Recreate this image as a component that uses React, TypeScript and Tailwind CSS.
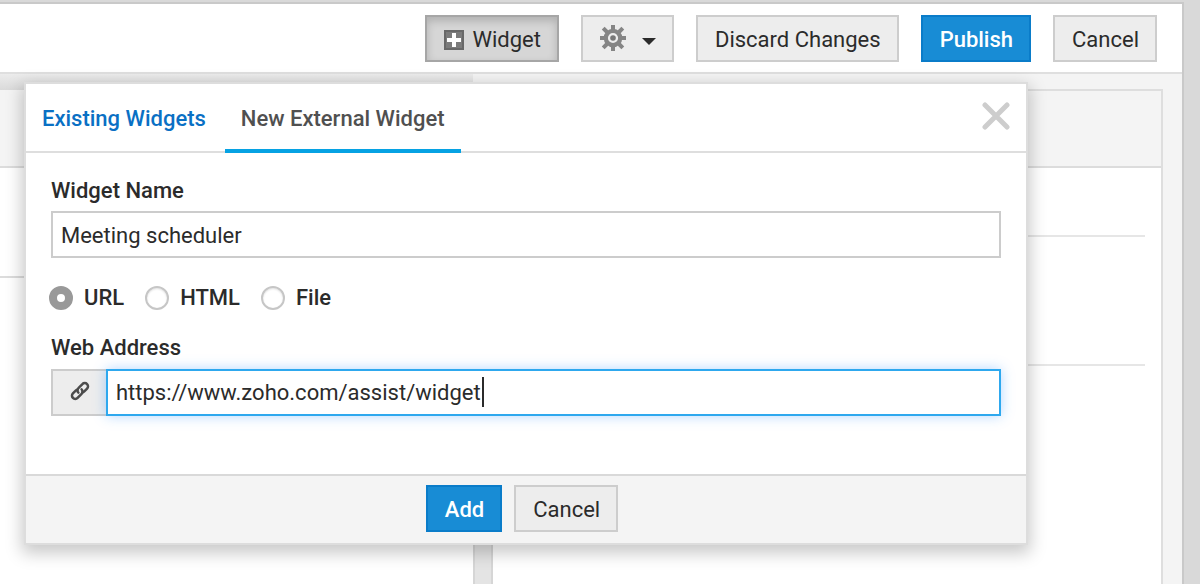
import React, { useState } from "react";
import type { ButtonHTMLAttributes } from "react";

const kinds = {
  plain: "border-[#cdcdcd] bg-[#ededed] text-[#2b2b2b]",
  primary: "border-[#0a7cc9] bg-[#188cd5] font-medium text-white",
  pressed:
    "border-[#a6a6a6] bg-[#d6d6d6] text-[#2b2b2b] shadow-[inset_0_4px_8px_rgba(0,0,0,0.18)]",
};

type ButtonProps = ButtonHTMLAttributes<HTMLButtonElement> & {
  kind?: keyof typeof kinds;
};

function Button({ kind = "plain", children, ...rest }: ButtonProps) {
  return (
    <button
      type="button"
      className={`flex h-[47px] shrink-0 items-center justify-center border-2 pt-0.5 pr-4 pl-[17px] whitespace-nowrap ${kinds[kind]}`}
      {...rest}
    >
      {children}
    </button>
  );
}

function PlusBox() {
  return (
    <svg width="20" height="20" viewBox="0 0 20 20" className="mr-2" aria-hidden="true">
      <rect x="1" y="1" width="18" height="18" fill="#7b7b7b" stroke="#686868" strokeWidth="2" />
      <path d="M10 3v14M3 10h14" stroke="#fff" strokeWidth="4" />
    </svg>
  );
}

function Gear() {
  return (
    <svg width="26" height="26" viewBox="-13 -13 26 26" className="mb-1" aria-hidden="true">
      <g stroke="#858585" strokeWidth="4">
        <path d="M0-13V-8M0 13V8M-13 0H-8M13 0H8" />
        <path d="M-9.8-9.8-6-6M9.8 9.8 6 6M9.8-9.8 6-6M-9.8 9.8-6 6" />
      </g>
      <circle r="7.2" fill="#ededed" stroke="#858585" strokeWidth="4.2" />
      <circle r="2.8" fill="#777" />
    </svg>
  );
}

function LinkIcon() {
  return (
    <svg
      width="20"
      height="20"
      viewBox="0 0 20 20"
      fill="none"
      stroke="#4c4c4c"
      strokeWidth="2.5"
      strokeLinecap="round"
      aria-hidden="true"
    >
      <path d="M8.4 11.6a3 3 0 0 1 0-4.4l4-4.1a3.2 3.2 0 0 1 4.7 0 3.2 3.2 0 0 1 0 4.5l-2.8 2.8a3.2 3.2 0 0 1-2 .9" />
      <path d="M11.6 8.4a3 3 0 0 1 0 4.4l-4 4.1a3.2 3.2 0 0 1-4.7 0 3.2 3.2 0 0 1 0-4.5l2.8-2.8a3.2 3.2 0 0 1 2-.9" />
    </svg>
  );
}

function Toolbar() {
  return (
    <header className="flex h-[70px] items-center justify-end gap-[22px] border-b-2 border-[#dfdfdf] bg-white pt-px pr-[25px]">
      <Button kind="pressed">
        <PlusBox />
        Widget
      </Button>
      <Button aria-label="Settings">
        <Gear />
        <svg width="14" height="8" viewBox="0 0 14 8" className="mt-1 ml-4" aria-hidden="true">
          <path d="M0 0h14L7 7z" fill="#2b2b2b" />
        </svg>
      </Button>
      <Button>Discard Changes</Button>
      <Button kind="primary">Publish</Button>
      <Button>Cancel</Button>
    </header>
  );
}

function Canvas() {
  return (
    <div className="flex grow bg-[#f4f4f4]">
      <div className="flex w-[473px] shrink-0 flex-col">
        <div className="h-4 bg-linear-to-b from-[#ececec] to-[#dadada]" />
        <div className="h-[78px] border-b-2 border-[#dcdcdc]" />
        <div className="h-[110px] border-b-2 border-[#dcdcdc] bg-white" />
        <div className="grow bg-white" />
      </div>
      <div className="mt-4 w-5 shrink-0 border-x-2 border-[#d6d6d6] bg-[#e4e4e4]" />
      <div className="flex grow flex-col pt-[15px] pr-[19px]">
        <div className="flex grow flex-col border-t-2 border-r-2 border-[#dedede]">
          <div className="h-[77px] border-b-2 border-[#dcdcdc]" />
          <div className="grow bg-white pr-4">
            <div className="h-[69px] border-b-2 border-[#e6e6e6]" />
            <div className="h-[129px] border-b-2 border-[#e6e6e6]" />
          </div>
        </div>
      </div>
    </div>
  );
}

const sources = ["URL", "HTML", "File"];

function WidgetDialog() {
  const [name, setName] = useState("Meeting scheduler");
  const [address, setAddress] = useState("https://www.zoho.com/assist/widget");
  const [source, setSource] = useState("URL");
  return (
    <section
      role="dialog"
      aria-label="Add widget"
      className="absolute top-[82px] right-[172px] left-6 border-2 border-[#dddddd] bg-white shadow-[0_6px_16px_2px_rgba(0,0,0,0.22)]"
    >
      <div className="flex h-[69px] items-stretch border-b-2 border-[#dedede] font-medium">
        <button type="button" className="px-4 pt-0.5 text-[#0a70c4]">
          Existing Widgets
        </button>
        <button
          type="button"
          className="-mb-0.5 ml-[3px] border-b-4 border-[#06a2e3] px-4 pt-1 text-[#505050]"
        >
          New External Widget
        </button>
        <button type="button" aria-label="Close" className="mr-4 mb-1 ml-auto">
          <svg width="28" height="28" viewBox="0 0 28 28" aria-hidden="true">
            <path d="M3 3l22 22M25 3 3 25" stroke="#cdcdcd" strokeWidth="5" strokeLinecap="round" />
          </svg>
        </button>
      </div>

      <form className="px-[25px] pt-6 pb-[58px]">
        <label htmlFor="name" className="block leading-7 font-medium">
          Widget Name
        </label>
        <input
          id="name"
          value={name}
          onChange={(e) => setName(e.target.value)}
          className="mt-1.5 block h-[47px] w-full border-2 border-[#cccccc] px-2 pt-0.5 outline-none"
        />

        <div className="mt-[26px] -ml-0.5 flex gap-[21px]">
          {sources.map((s) => (
            <label key={s} className="flex items-center gap-[11px] leading-7 font-medium">
              <input
                type="radio"
                name="source"
                checked={source === s}
                onChange={() => setSource(s)}
                className="size-6 appearance-none rounded-full border-2 border-[#c6c6c6] bg-white shadow-[inset_0_1px_2px_rgba(0,0,0,0.12)] checked:border-8 checked:border-[#999999] checked:shadow-none"
              />
              {s}
            </label>
          ))}
        </div>

        <label htmlFor="address" className="mt-[22px] block leading-7 font-medium">
          Web Address
        </label>
        <div className="relative mt-[7px] flex h-[47px]">
          <span className="flex w-[55px] shrink-0 items-center justify-center border-2 border-r-0 border-[#cccccc] bg-[#ededed] pb-1">
            <LinkIcon />
          </span>
          <input
            id="address"
            value={address}
            onChange={(e) => setAddress(e.target.value)}
            className="min-w-0 grow border-2 border-[#2ea8ee] px-2 caret-transparent shadow-[0_0_12px_rgba(40,140,255,0.35)] outline-none"
          />
          <span className="absolute top-2 left-[431px] h-[30px] w-0.5 bg-[#2b2b2b]" />
        </div>
      </form>

      <div className="flex h-[69px] items-center justify-center gap-3 border-t-2 border-[#d9d9d9] bg-[#f4f4f4] pr-2 pb-0.5">
        <Button kind="primary">Add</Button>
        <Button>Cancel</Button>
      </div>
    </section>
  );
}

export default function App() {
  return (
    <div className="relative flex min-h-screen overflow-hidden bg-[#d9d9d9] pt-0.5 pr-4 font-[Roboto,'Liberation_Sans',sans-serif] text-[22px] leading-7 text-[#2b2b2b]">
      <main className="flex grow flex-col border-t-2 border-r-2 border-[#c9c9c9]">
        <Toolbar />
        <Canvas />
      </main>
      <WidgetDialog />
    </div>
  );
}
